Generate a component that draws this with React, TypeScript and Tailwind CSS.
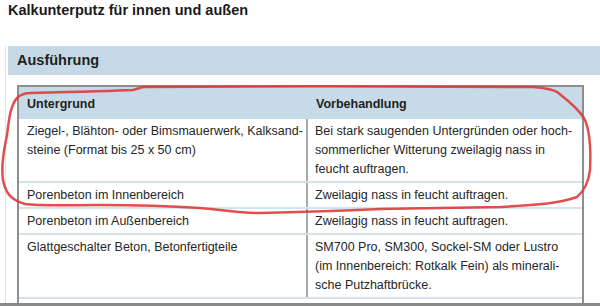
import React from "react";

type Row = { untergrund: string[]; vorbehandlung: string[] };

const rows: Row[] = [
  {
    untergrund: ["Ziegel-, Blähton- oder Bimsmauerwerk, Kalksand-", "steine (Format bis 25 x 50 cm)"],
    vorbehandlung: [
      "Bei stark saugenden Untergründen oder hoch-",
      "sommerlicher Witterung zweilagig nass in",
      "feucht auftragen.",
    ],
  },
  {
    untergrund: ["Porenbeton im Innenbereich"],
    vorbehandlung: ["Zweilagig nass in feucht auftragen."],
  },
  {
    untergrund: ["Porenbeton im Außenbereich"],
    vorbehandlung: ["Zweilagig nass in feucht auftragen."],
  },
  {
    untergrund: ["Glattgeschalter Beton, Betonfertigteile"],
    vorbehandlung: [
      "SM700 Pro, SM300, Sockel-SM oder Lustro",
      "(im Innenbereich: Rotkalk Fein) als minerali-",
      "sche Putzhaftbrücke.",
    ],
  },
];

function Lines({ lines }: { lines: string[] }) {
  return (
    <>
      {lines.map((l) => (
        <div key={l} className="whitespace-nowrap">
          {l}
        </div>
      ))}
    </>
  );
}

export default function App() {
  return (
    <div
      className="relative w-[600px] h-[306px] overflow-hidden bg-white flex flex-col text-[#262626]"
      style={{ fontFamily: '"Liberation Sans", Arial, sans-serif' }}
    >
      <h1 className="pl-2 pt-[3px] text-[14.5px] leading-[14px] font-bold text-[#1a1a1a]">
        Kalkunterputz für innen und außen
      </h1>

      <section className="flex-1 mt-[29px] ml-[5px] border-l border-[#e4e4e4] pl-[2px] flex flex-col">
        <div className="h-[29px] bg-[#c4d9e5] pl-[9px] flex items-center text-[14.5px] font-bold text-[#1f1f1f]">
          Ausführung
        </div>

        <div className="mt-[10px] ml-[9px] w-[567px] flex-1 border-x-2 border-t-2 border-[#8e8e8e] text-[12.5px] leading-[19px]">
          <div className="grid grid-cols-[289px_1fr] h-[32px] pt-[2px] bg-[#c6dbe7] font-bold text-[#1f1f1f]">
            <div className="pl-2 flex items-center">Untergrund</div>
            <div className="pl-[8px] flex items-center">Vorbehandlung</div>
          </div>
          {rows.map((r, i) => (
            <div key={i} className="grid grid-cols-[289px_1fr] border-b-2 border-[#d3e3ec]">
              <div className="pl-2 pt-[3px] pb-[2px] border-r-2 border-[#a9a9a9]">
                <Lines lines={r.untergrund} />
              </div>
              <div className="pl-[7px] pt-[3px] pb-[2px]">
                <Lines lines={r.vorbehandlung} />
              </div>
            </div>
          ))}
        </div>
      </section>

      <div className="h-[3px] bg-[#8a8a8a]" />

      {/* hand-drawn red annotation */}
      <svg className="absolute inset-0 pointer-events-none" width="600" height="306" viewBox="0 0 600 306">
        <path
          d="M 30 93 C 70 92, 110 91, 133 90 L 143 87 C 250 86, 450 86, 533 87 C 545 88, 552 89, 557 92 C 566 99, 577 107, 584 118 C 590 130, 591 150, 590 170 C 589 180, 585 190, 577 197 C 560 203, 540 205, 500 207 C 460 208, 420 208, 380 209 C 340 211, 300 212, 260 213 C 240 213, 225 210, 200 208 C 170 206, 140 205, 100 205 C 70 205, 40 206, 25 204 C 12 200, 6 195, 3 180 C 1 165, 4 150, 7 135 C 9 120, 10 105, 18 97 C 22 94, 26 93, 30 93 Z"
          fill="none"
          stroke="#de3b3b"
          strokeWidth="2.5"
          strokeLinejoin="round"
          strokeLinecap="round"
          opacity="0.9"
        />
      </svg>
    </div>
  );
}
